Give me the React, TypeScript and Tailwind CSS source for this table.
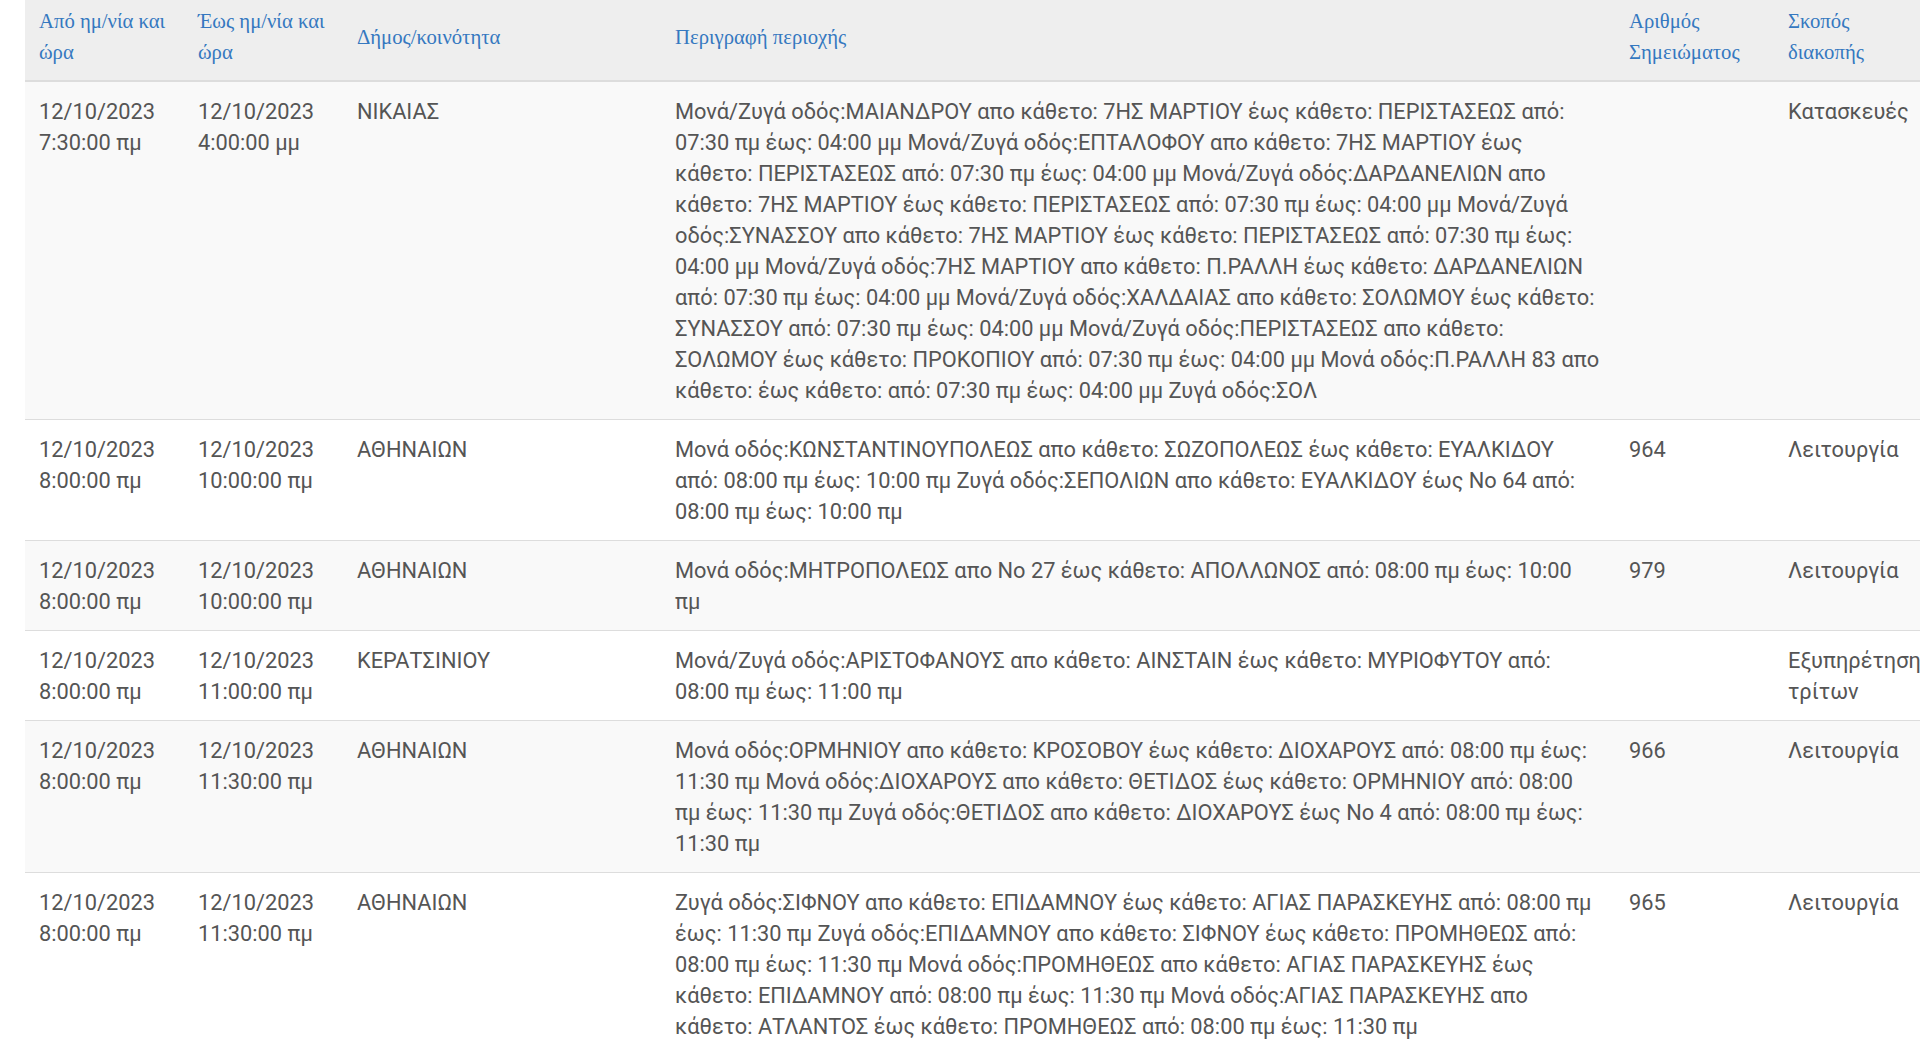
import React from "react";

type Outage = {
  from: [string, string];
  to: [string, string];
  area: string;
  desc: string[];
  note: string;
  purpose: string;
};

// description is kept as the lines the original page wraps it into
const outages: Outage[] = [
  {
    from: ["12/10/2023", "7:30:00 πμ"],
    to: ["12/10/2023", "4:00:00 μμ"],
    area: "ΝΙΚΑΙΑΣ",
    desc: [
      "Μονά/Ζυγά οδός:ΜΑΙΑΝΔΡΟΥ απο κάθετο: 7ΗΣ ΜΑΡΤΙΟΥ έως κάθετο: ΠΕΡΙΣΤΑΣΕΩΣ από:",
      "07:30 πμ έως: 04:00 μμ Μονά/Ζυγά οδός:ΕΠΤΑΛΟΦΟΥ απο κάθετο: 7ΗΣ ΜΑΡΤΙΟΥ έως",
      "κάθετο: ΠΕΡΙΣΤΑΣΕΩΣ από: 07:30 πμ έως: 04:00 μμ Μονά/Ζυγά οδός:ΔΑΡΔΑΝΕΛΙΩΝ απο",
      "κάθετο: 7ΗΣ ΜΑΡΤΙΟΥ έως κάθετο: ΠΕΡΙΣΤΑΣΕΩΣ από: 07:30 πμ έως: 04:00 μμ Μονά/Ζυγά",
      "οδός:ΣΥΝΑΣΣΟΥ απο κάθετο: 7ΗΣ ΜΑΡΤΙΟΥ έως κάθετο: ΠΕΡΙΣΤΑΣΕΩΣ από: 07:30 πμ έως:",
      "04:00 μμ Μονά/Ζυγά οδός:7ΗΣ ΜΑΡΤΙΟΥ απο κάθετο: Π.ΡΑΛΛΗ έως κάθετο: ΔΑΡΔΑΝΕΛΙΩΝ",
      "από: 07:30 πμ έως: 04:00 μμ Μονά/Ζυγά οδός:ΧΑΛΔΑΙΑΣ απο κάθετο: ΣΟΛΩΜΟΥ έως κάθετο:",
      "ΣΥΝΑΣΣΟΥ από: 07:30 πμ έως: 04:00 μμ Μονά/Ζυγά οδός:ΠΕΡΙΣΤΑΣΕΩΣ απο κάθετο:",
      "ΣΟΛΩΜΟΥ έως κάθετο: ΠΡΟΚΟΠΙΟΥ από: 07:30 πμ έως: 04:00 μμ Μονά οδός:Π.ΡΑΛΛΗ 83 απο",
      "κάθετο: έως κάθετο: από: 07:30 πμ έως: 04:00 μμ Ζυγά οδός:ΣΟΛ",
    ],
    note: "",
    purpose: "Κατασκευές",
  },
  {
    from: ["12/10/2023", "8:00:00 πμ"],
    to: ["12/10/2023", "10:00:00 πμ"],
    area: "ΑΘΗΝΑΙΩΝ",
    desc: [
      "Μονά οδός:ΚΩΝΣΤΑΝΤΙΝΟΥΠΟΛΕΩΣ απο κάθετο: ΣΩΖΟΠΟΛΕΩΣ έως κάθετο: ΕΥΑΛΚΙΔΟΥ",
      "από: 08:00 πμ έως: 10:00 πμ Ζυγά οδός:ΣΕΠΟΛΙΩΝ απο κάθετο: ΕΥΑΛΚΙΔΟΥ έως Νο 64 από:",
      "08:00 πμ έως: 10:00 πμ",
    ],
    note: "964",
    purpose: "Λειτουργία",
  },
  {
    from: ["12/10/2023", "8:00:00 πμ"],
    to: ["12/10/2023", "10:00:00 πμ"],
    area: "ΑΘΗΝΑΙΩΝ",
    desc: [
      "Μονά οδός:ΜΗΤΡΟΠΟΛΕΩΣ απο Νο 27 έως κάθετο: ΑΠΟΛΛΩΝΟΣ από: 08:00 πμ έως: 10:00",
      "πμ",
    ],
    note: "979",
    purpose: "Λειτουργία",
  },
  {
    from: ["12/10/2023", "8:00:00 πμ"],
    to: ["12/10/2023", "11:00:00 πμ"],
    area: "ΚΕΡΑΤΣΙΝΙΟΥ",
    desc: [
      "Μονά/Ζυγά οδός:ΑΡΙΣΤΟΦΑΝΟΥΣ απο κάθετο: ΑΙΝΣΤΑΙΝ έως κάθετο: ΜΥΡΙΟΦΥΤΟΥ από:",
      "08:00 πμ έως: 11:00 πμ",
    ],
    note: "",
    purpose: "Εξυπηρέτηση τρίτων",
  },
  {
    from: ["12/10/2023", "8:00:00 πμ"],
    to: ["12/10/2023", "11:30:00 πμ"],
    area: "ΑΘΗΝΑΙΩΝ",
    desc: [
      "Μονά οδός:ΟΡΜΗΝΙΟΥ απο κάθετο: ΚΡΟΣΟΒΟΥ έως κάθετο: ΔΙΟΧΑΡΟΥΣ από: 08:00 πμ έως:",
      "11:30 πμ Μονά οδός:ΔΙΟΧΑΡΟΥΣ απο κάθετο: ΘΕΤΙΔΟΣ έως κάθετο: ΟΡΜΗΝΙΟΥ από: 08:00",
      "πμ έως: 11:30 πμ Ζυγά οδός:ΘΕΤΙΔΟΣ απο κάθετο: ΔΙΟΧΑΡΟΥΣ έως Νο 4 από: 08:00 πμ έως:",
      "11:30 πμ",
    ],
    note: "966",
    purpose: "Λειτουργία",
  },
  {
    from: ["12/10/2023", "8:00:00 πμ"],
    to: ["12/10/2023", "11:30:00 πμ"],
    area: "ΑΘΗΝΑΙΩΝ",
    desc: [
      "Ζυγά οδός:ΣΙΦΝΟΥ απο κάθετο: ΕΠΙΔΑΜΝΟΥ έως κάθετο: ΑΓΙΑΣ ΠΑΡΑΣΚΕΥΗΣ από: 08:00 πμ",
      "έως: 11:30 πμ Ζυγά οδός:ΕΠΙΔΑΜΝΟΥ απο κάθετο: ΣΙΦΝΟΥ έως κάθετο: ΠΡΟΜΗΘΕΩΣ από:",
      "08:00 πμ έως: 11:30 πμ Μονά οδός:ΠΡΟΜΗΘΕΩΣ απο κάθετο: ΑΓΙΑΣ ΠΑΡΑΣΚΕΥΗΣ έως",
      "κάθετο: ΕΠΙΔΑΜΝΟΥ από: 08:00 πμ έως: 11:30 πμ Μονά οδός:ΑΓΙΑΣ ΠΑΡΑΣΚΕΥΗΣ απο",
      "κάθετο: ΑΤΛΑΝΤΟΣ έως κάθετο: ΠΡΟΜΗΘΕΩΣ από: 08:00 πμ έως: 11:30 πμ",
    ],
    note: "965",
    purpose: "Λειτουργία",
  },
];

const headers = [
  { label: "Από ημ/νία και ώρα", w: "w-[159px]" },
  { label: "Έως ημ/νία και ώρα", w: "w-[159px]" },
  { label: "Δήμος/κοινότητα", w: "w-[318px]" },
  { label: "Περιγραφή περιοχής", w: "w-[954px]" },
  { label: "Αριθμός Σημειώματος", w: "w-[159px]" },
  { label: "Σκοπός διακοπής", w: "w-[159px]" },
];

const cell = "px-[14px] pt-[14px] pb-[13px] align-top";

export default function App() {
  return (
    <div className="w-[1920px] h-[1048px] overflow-hidden bg-white pl-[25px]">
      <table className="w-[1908px] table-fixed border-collapse text-left">
        <thead>
          <tr className="bg-[#eeeeee] border-b-2 border-[#dddddd]">
            {headers.map((h) => (
              <th
                key={h.label}
                className={`${h.w} px-[14px] pt-[6px] pb-[12px] align-middle font-normal text-[20.7px] leading-[31px] text-[#3578c0] font-['Liberation_Serif',serif]`}
              >
                {h.label}
              </th>
            ))}
          </tr>
        </thead>
        <tbody className="font-['Roboto',sans-serif] text-[21.8px] leading-[31px] text-[#555555]">
          {outages.map((o, i) => (
            <tr
              key={i}
              className={`border-t border-[#dddddd] ${i % 2 === 0 ? "bg-[#f9f9f9]" : "bg-white"}`}
            >
              <td className={cell}>
                {o.from[0]}
                <br />
                {o.from[1]}
              </td>
              <td className={cell}>
                {o.to[0]}
                <br />
                {o.to[1]}
              </td>
              <td className={cell}>{o.area}</td>
              <td className={`${cell} whitespace-nowrap`}>
                {o.desc.map((line, j) => (
                  <div key={j}>{line}</div>
                ))}
              </td>
              <td className={cell}>{o.note}</td>
              <td className={cell}>{o.purpose}</td>
            </tr>
          ))}
        </tbody>
      </table>
    </div>
  );
}
